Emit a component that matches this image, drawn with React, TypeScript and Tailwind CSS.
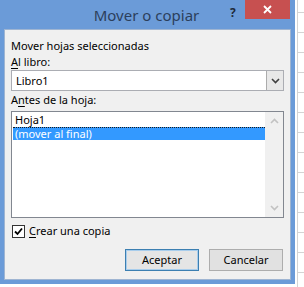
import type { ReactNode } from "react";

const font = { fontFamily: '"Noto Sans", "Open Sans", Arial, sans-serif' };

function U({ children }: { children: ReactNode }) {
  return <span className="underline underline-offset-[2px]">{children}</span>;
}

function Chevron({ up, className }: { up?: boolean; className?: string }) {
  return (
    <svg width="9" height="6" viewBox="0 0 9 6" className={className}>
      <path
        d={up ? "M1 5 L4.5 1.5 L8 5" : "M1 1 L4.5 4.5 L8 1"}
        fill="none"
        stroke="currentColor"
        strokeWidth="1.6"
      />
    </svg>
  );
}

export default function App() {
  return (
    <div className="relative w-[304px] h-[287px] bg-white overflow-hidden" style={font}>
      {/* spreadsheet behind the dialog */}
      <div className="absolute left-[297px] top-0 w-[7px] h-full border-l border-[#d4d4d4] flex flex-col pt-[12px]">
        {Array.from({ length: 14 }).map((_, i) => (
          <div key={i} className="h-[20px] shrink-0 border-t border-[#d4d4d4]" />
        ))}
      </div>

      <div className="relative w-[295px] h-[284px] bg-[#6b9bd8] flex flex-col px-[4px] pb-[4px]">
        {/* title bar */}
        <div className="relative h-[29px] shrink-0 flex items-start justify-center">
          <span className="mt-[6px] ml-[-2px] text-[15px] leading-[18px] text-[#2b3f5c]">Mover o copiar</span>
          <span className="absolute left-[226px] top-[4px] text-[12px] font-bold text-[#1e2a3a]">?</span>
          <div className="absolute left-[241px] top-0 w-[45px] h-[19px] bg-[#c75050] flex items-center justify-center">
            <svg width="9" height="9" viewBox="0 0 9 9">
              <path d="M1 1 L8 8 M8 1 L1 8" stroke="white" strokeWidth="1.8" />
            </svg>
          </div>
        </div>

        {/* body */}
        <div className="flex-1 bg-[#f0f0f0] border border-[#9fb5d2] flex flex-col px-[6px] pt-[8px] text-[11px] text-black">
          <div className="h-[15px] leading-[15px]">Mover hojas seleccionadas</div>
          <div className="h-[15px] leading-[15px] mt-[1px]">
            <U>A</U>l libro:
          </div>
          <div className="mt-[1px] h-[21px] bg-white border border-[#abadb3] flex">
            <div className="flex-1 pl-[4px] leading-[19px]">Libro1</div>
            <div className="w-[17px] bg-[#e8e8e8] border-l border-[#acacac] flex items-center justify-center text-[#404040]">
              <Chevron />
            </div>
          </div>
          <div className="h-[16px] leading-[16px] mt-[1px]">
            A<U>n</U>tes de la hoja:
          </div>
          <div className="mt-[3px] h-[107px] bg-white border border-[#828790] flex">
            <div className="flex-1 pl-[1px] pt-[1px] flex flex-col">
              <div className="h-[14px] leading-[14px] pl-[2px]">Hoja1</div>
              <div className="h-[13px] leading-[12px] pl-[2px] bg-[#3399ff] text-white border-t border-dotted border-[#1a1a1a]">
                (mover al final)
              </div>
            </div>
            <div className="w-[18px] bg-[#f0f0f0] flex flex-col items-center justify-between py-[6px] text-[#c2c2c2]">
              <Chevron up />
              <Chevron />
            </div>
          </div>
          <div className="mt-[6px] h-[14px] flex items-center gap-[4px]">
            <div className="ml-[1px] w-[13px] h-[13px] bg-white border border-[#333] flex items-center justify-center">
              <svg width="9" height="9" viewBox="0 0 9 9">
                <path d="M1 4.5 L3.5 7 L8 1.5" fill="none" stroke="black" strokeWidth="1.8" />
              </svg>
            </div>
            <span className="leading-[14px]">
              <U>C</U>rear una copia
            </span>
          </div>
          <div className="mt-[11px] flex justify-end gap-[10px] pr-[1px]">
            <div className="w-[74px] h-[22px] bg-[#e5e5e5] border border-[#3c7fb1] shadow-[inset_0_0_0_1px_#a8cdec] flex items-center justify-center">
              Aceptar
            </div>
            <div className="w-[74px] h-[22px] bg-[#e1e1e1] border border-[#adadad] flex items-center justify-center">
              Cancelar
            </div>
          </div>
        </div>
      </div>
    </div>
  );
}
